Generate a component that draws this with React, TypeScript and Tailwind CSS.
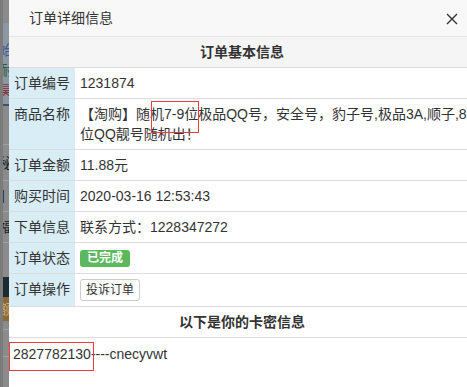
function BackdropStrip() {
  return (
    <div className="flex w-[9px] shrink-0 overflow-hidden bg-[#8b8b8b] text-[14px] leading-[20px]">
      <div className="w-[3px] shrink-0 bg-[#7b7b7b]" />
      <div className="flex w-[6px] flex-col overflow-hidden">
        <div className="h-[23px] shrink-0" />
        <div className="flex h-[83px] shrink-0 flex-col border-b-2 border-[#44506b] bg-[#8d97a3] pt-[17px]">
          <span className="-ml-[4px] text-[#3d5a9a]">始</span>
          <span className="-ml-[4px] text-[#2f5a36]">耐</span>
          <span className="-ml-[4px] text-[#8a3030]">昊</span>
        </div>
        <div className="h-[39px] shrink-0 border-b border-[#a0a0a0]" />
        <div className="flex h-[36px] shrink-0 items-center border-b border-[#a0a0a0]">
          <span className="-ml-[4px] text-[#222]">秘</span>
        </div>
        <div className="flex h-[31px] shrink-0 items-center border-b border-[#a0a0a0]">
          <span className="-ml-[4px] text-[#222]">】</span>
        </div>
        <div className="flex h-[31px] shrink-0 items-center border-b border-[#a0a0a0]">
          <span className="-ml-[4px] text-[#222]">福</span>
        </div>
        <div className="h-[34px] shrink-0" />
        <div className="h-[20px] shrink-0 bg-[#1c2a34]" />
        <div className="flex h-[24px] shrink-0 items-center bg-[#8a6a34]">
          <span className="-ml-[4px] text-[#c9a878]">额</span>
        </div>
        <div className="h-[9px] shrink-0 border-b border-[#a0a0a0]" />
        <div className="h-[27px] shrink-0 border-b border-[#a0a0a0]" />
      </div>
    </div>
  )
}

function InfoRow({ label, children, center }: { label: string; children: React.ReactNode; center?: boolean }) {
  return (
    <div className="flex border-b border-[#ddd]">
      <div className="w-[66px] shrink-0 bg-[#d9edf7] p-[5px] whitespace-nowrap">{label}</div>
      <div className={`flex-1 p-[5px] ${center ? 'flex items-center' : ''}`}>{children}</div>
    </div>
  )
}

function App() {
  return (
    <div className="flex w-[467px] h-[387px] overflow-hidden bg-white font-['Liberation_Sans','Noto_Sans_CJK_SC',sans-serif] text-[14px] leading-5 text-[#333]">
      <BackdropStrip />
      <div className="relative w-[466px] shrink-0 bg-white">
        <div className="flex h-[37px] items-center justify-between border-b border-[#e5e5e5] bg-[#f8f8f8] pl-5 pr-[17px]">
          <span>订单详细信息</span>
          <svg width="12" height="12" viewBox="0 0 12 12" className="mt-[1px]">
            <path d="M1 1L11 11M11 1L1 11" stroke="#333" strokeWidth="1.4" fill="none" />
          </svg>
        </div>
        <div className="border-b border-[#ddd] bg-[#f5f5f5] p-[5px] text-center font-bold">订单基本信息</div>
        <InfoRow label="订单编号">1231874</InfoRow>
        <InfoRow label="商品名称">
          <div className="whitespace-nowrap">
            【淘购】随
            <span className="relative">
              机7-9位
              <span className="absolute left-[1px] -top-[5px] h-[32px] w-[48px] border border-[#f03c3c]" />
            </span>
            极品QQ号，安全号，豹子号,极品3A,顺子,8
          </div>
          <div className="whitespace-nowrap">位QQ靓号随机出！</div>
        </InfoRow>
        <InfoRow label="订单金额">11.88元</InfoRow>
        <InfoRow label="购买时间">2020-03-16 12:53:43</InfoRow>
        <InfoRow label="下单信息">联系方式：1228347272</InfoRow>
        <InfoRow label="订单状态" center>
          <span className="inline-block h-[17px] rounded-[3px] bg-[#5cb85c] px-[7px] text-[12px] font-bold leading-[17px] text-white">
            已完成
          </span>
        </InfoRow>
        <InfoRow label="订单操作" center>
          <button className="rounded-[3px] border border-[#ccc] bg-white px-[5px] text-[12px] leading-[20px] text-[#333]">
            投诉订单
          </button>
        </InfoRow>
        <div className="border-b border-[#ddd] p-[5px] text-center font-bold">以下是你的卡密信息</div>
        <div className="px-[4px] py-[6px]">
          <span className="relative">
            2827782130
            <span className="absolute -left-[4px] -top-[4px] h-[29px] w-[85px] border border-[#f03c3c]" />
          </span>
          ----cnecyvwt
        </div>
      </div>
    </div>
  )
}

export default App
